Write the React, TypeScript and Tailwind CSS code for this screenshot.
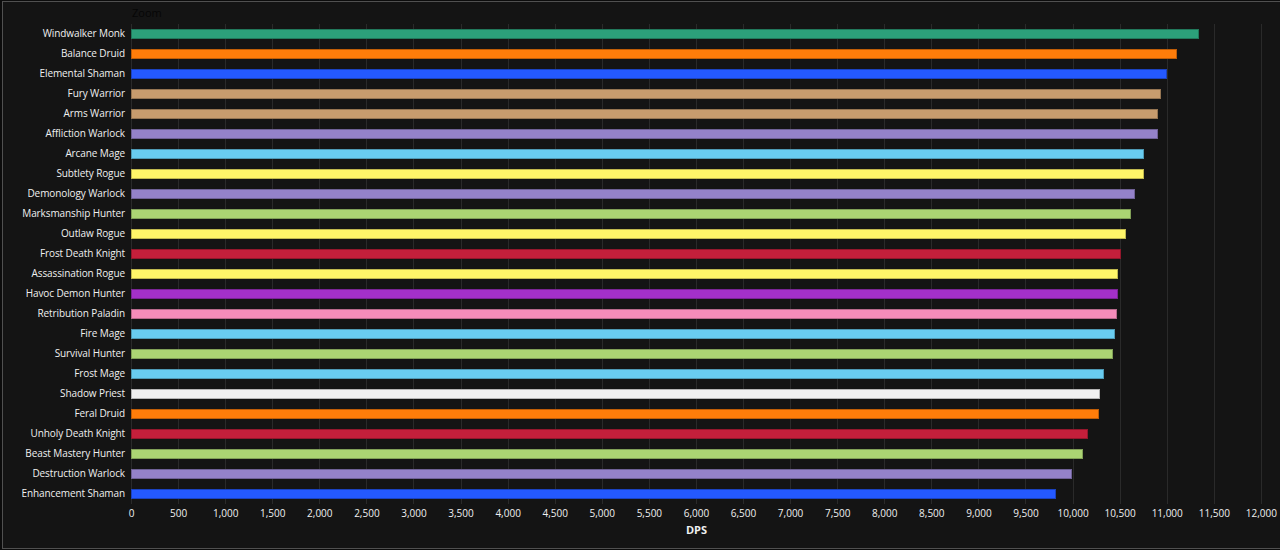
const specs: [string, string, number][] = [
  ["Windwalker Monk", "#2ca07a", 1199],
  ["Balance Druid", "#ff7d0a", 1177],
  ["Elemental Shaman", "#2459ff", 1167],
  ["Fury Warrior", "#c79c6e", 1161],
  ["Arms Warrior", "#c79c6e", 1158],
  ["Affliction Warlock", "#9482c9", 1158],
  ["Arcane Mage", "#69ccf0", 1144],
  ["Subtlety Rogue", "#fff569", 1144],
  ["Demonology Warlock", "#9482c9", 1135],
  ["Marksmanship Hunter", "#abd473", 1131],
  ["Outlaw Rogue", "#fff569", 1126],
  ["Frost Death Knight", "#c41f3b", 1121],
  ["Assassination Rogue", "#fff569", 1118],
  ["Havoc Demon Hunter", "#a330c9", 1118],
  ["Retribution Paladin", "#f58cba", 1117],
  ["Fire Mage", "#69ccf0", 1115],
  ["Survival Hunter", "#abd473", 1113],
  ["Frost Mage", "#69ccf0", 1104],
  ["Shadow Priest", "#f0f0f0", 1100],
  ["Feral Druid", "#ff7d0a", 1099],
  ["Unholy Death Knight", "#c41f3b", 1088],
  ["Beast Mastery Hunter", "#abd473", 1083],
  ["Destruction Warlock", "#9482c9", 1072],
  ["Enhancement Shaman", "#2459ff", 1056],
];

const ticks = Array.from({ length: 25 }, (_, i) => (i * 500).toLocaleString("en-US"));

export default function App() {
  return (
    <div className="h-[550px] w-[1280px] overflow-hidden bg-[#0c0c0c] pt-px pb-px pl-[2px] font-['Open_Sans','DejaVu_Sans',sans-serif] text-white">
      <div className="h-full border-y border-l border-[#505050] bg-[#141414]">
        <div className="flex h-[22px] items-center pl-[129px] text-[11px] text-[#060606]">Zoom</div>
        <div className="flex">
          <div className="w-[128px] shrink-0">
            {specs.map(([name]) => (
              <div key={name} className="flex h-5 items-center justify-end whitespace-nowrap pr-[6px] pb-px text-[10px] font-medium tracking-[-0.1px] text-[#f0f0f0]">
                {name}
              </div>
            ))}
          </div>
          <div className="relative w-[1131px]">
            <div className="absolute inset-0 flex justify-between">
              {ticks.map((t) => (
                <div key={t} className="w-px bg-[#2a2a2a]" />
              ))}
            </div>
            {specs.map(([name, color, end]) => (
              <div key={name} className="relative flex h-5 items-center">
                <div className="h-2.5 border border-black/25" style={{ width: end - 131, backgroundColor: color }} />
              </div>
            ))}
          </div>
        </div>
        <div className="ml-[128px] flex w-[1131px] justify-between pt-px">
          {ticks.map((t) => (
            <div key={t} className="flex h-4 w-px items-center justify-center whitespace-nowrap text-[10px] font-medium text-[#f0f0f0]">
              {t}
            </div>
          ))}
        </div>
        <div className="ml-[128px] w-[1131px] pt-px text-center text-[11px] font-bold text-[#f0f0f0]">DPS</div>
      </div>
    </div>
  );
}
